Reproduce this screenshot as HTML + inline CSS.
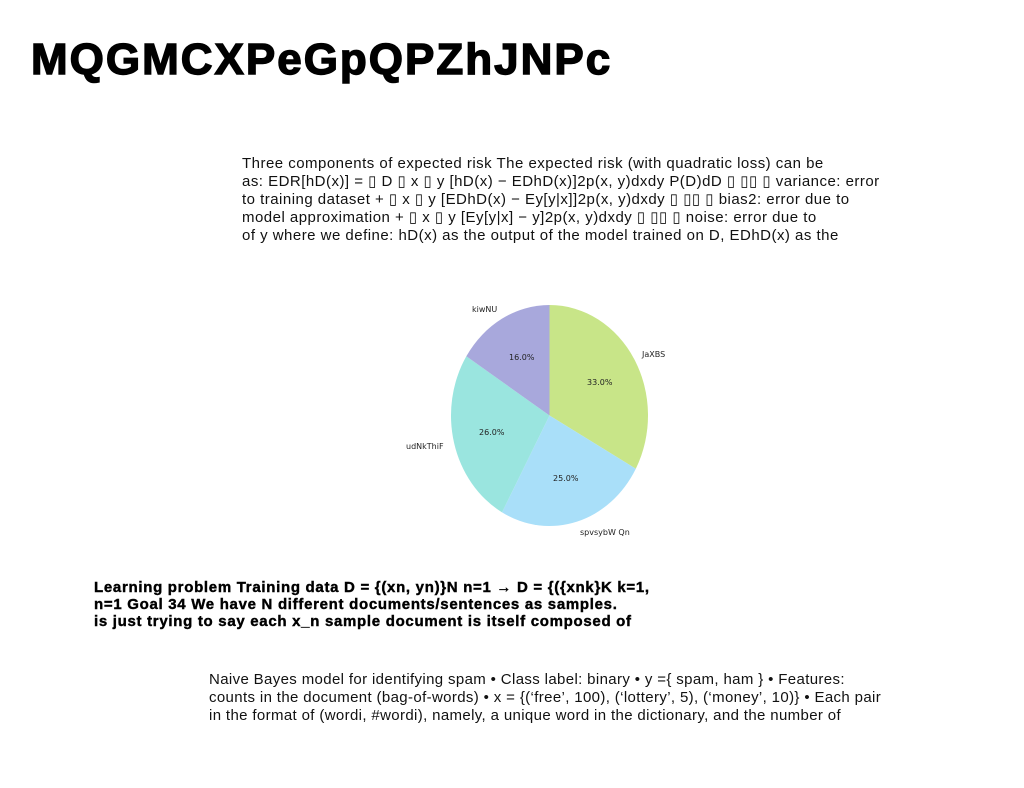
<!DOCTYPE html>
<html><head><meta charset="utf-8"><style>
body{margin:0;width:1024px;height:788px;background:#fff;position:relative;overflow:hidden;font-family:"Liberation Sans",sans-serif;color:#111}
.t{position:absolute;left:31px;top:34px;font-size:44px;font-weight:900;letter-spacing:2px;line-height:52px;color:#000;-webkit-text-stroke:1.4px #000}
.p{position:absolute;white-space:nowrap;font-size:15px;line-height:18px;letter-spacing:0.48px}
.b{position:absolute;left:94px;top:579px;white-space:nowrap;font-size:15px;font-weight:bold;line-height:17px;letter-spacing:0.7px;color:#000;-webkit-text-stroke:0.4px #000}
svg text{font-family:"DejaVu Sans",sans-serif;font-size:8px;fill:#222}
</style></head><body>
<div class="t">MQGMCXPeGpQPZhJNPc</div>
<div class="p" style="left:242px;top:155px">Three components of expected risk The expected risk (with quadratic loss) can be<br>as: EDR[hD(x)] = ▯ D ▯ x ▯ y [hD(x) − EDhD(x)]2p(x, y)dxdy P(D)dD ▯ ▯▯ ▯ variance: error<br>to training dataset + ▯ x ▯ y [EDhD(x) − Ey[y|x]]2p(x, y)dxdy ▯ ▯▯ ▯ bias2: error due to<br>model approximation + ▯ x ▯ y [Ey[y|x] − y]2p(x, y)dxdy ▯ ▯▯ ▯ noise: error due to<br>of y where we define: hD(x) as the output of the model trained on D, EDhD(x) as the</div>
<svg width="1024" height="788" style="position:absolute;left:0;top:0">
<g transform="translate(549.5,415.5) scale(98.5,110.5)">
<path d="M0,0 L0,-1 A1,1 0 0 1 0.8763,0.4818 Z" fill="#c8e588"/>
<path d="M0,0 L0.8763,0.4818 A1,1 0 0 1 -0.4818,0.8763 Z" fill="#a9dff9"/>
<path d="M0,0 L-0.4818,0.8763 A1,1 0 0 1 -0.8443,-0.5358 Z" fill="#9ae5df"/>
<path d="M0,0 L-0.8443,-0.5358 A1,1 0 0 1 0,-1 Z" fill="#a8a8dc"/>
</g>
<text x="472" y="312">kiwNU</text>
<text x="509" y="360">16.0%</text>
<text x="642" y="357">JaXBS</text>
<text x="587" y="385">33.0%</text>
<text x="479" y="435">26.0%</text>
<text x="406" y="449">udNkThiF</text>
<text x="553" y="481">25.0%</text>
<text x="580" y="535">spvsybW Qn</text>
</svg>
<div class="b">Learning problem Training data D = {(xn, yn)}N n=1 → D = {({xnk}K k=1,<br>n=1 Goal 34 We have N different documents/sentences as samples.<br>is just trying to say each x_n sample document is itself composed of</div>
<div class="p" style="left:209px;top:671px;letter-spacing:0.36px">Naive Bayes model for identifying spam • Class label: binary • y ={ spam, ham } • Features:<br>counts in the document (bag-of-words) • x = {(‘free’, 100), (‘lottery’, 5), (‘money’, 10)} • Each pair<br>in the format of (wordi, #wordi), namely, a unique word in the dictionary, and the number of</div>
</body></html>
